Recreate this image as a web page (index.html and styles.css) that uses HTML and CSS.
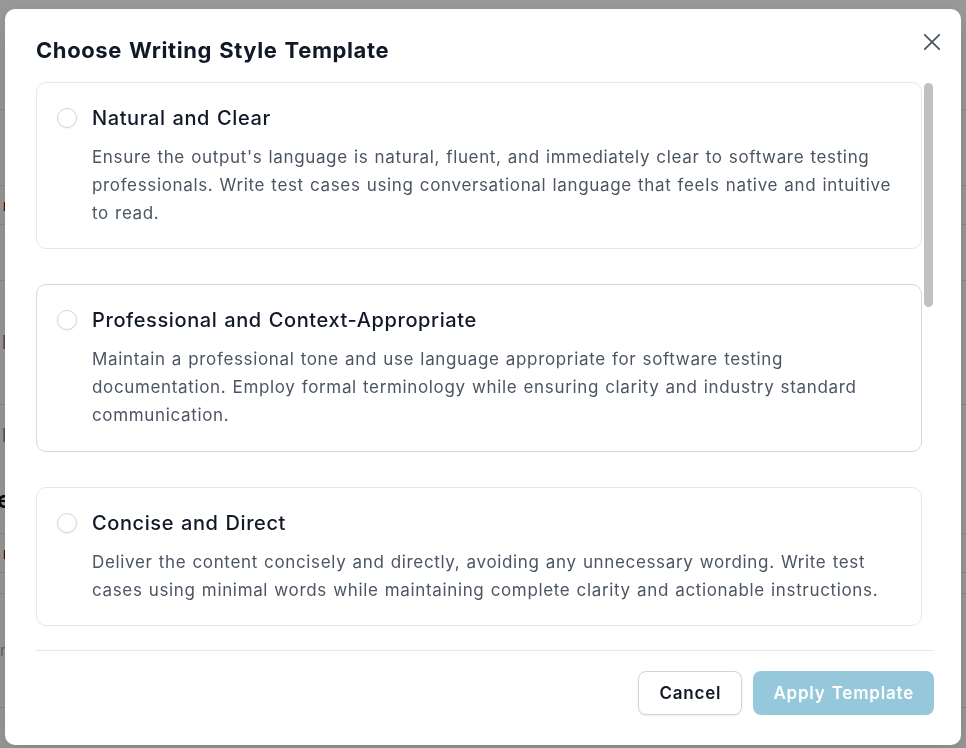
FILE: index.html
```html
<!DOCTYPE html>
<html lang="en">
<head>
<meta charset="utf-8">
<title>Choose Writing Style Template</title>
<link rel="stylesheet" href="styles.css">
</head>
<body>
<div class="page">
  <div class="row r1"></div>
  <div class="row r2"></div>
  <div class="row r3"><span class="bg-text red">r</span></div>
  <div class="row r4"></div>
  <div class="row r5"><span class="bg-text mauve">l</span></div>
  <div class="row r6"><span class="bg-text blue">l</span><h3 class="bg-head">Template</h3></div>
  <div class="row r7"><span class="bg-text red">r</span></div>
  <div class="row r8"></div>
  <div class="row r9"><span class="bg-text gray">r</span></div>
  <div class="row r10"></div>
</div>
<div class="overlay"></div>

<div class="modal" role="dialog" aria-labelledby="modal-title">
  <button class="close" type="button" aria-label="Close">
    <svg width="24" height="24" viewBox="0 0 24 24" fill="none" stroke="currentColor" stroke-width="1.8" stroke-linecap="round"><path d="M4.8 4.8 19.2 19.2M19.2 4.8 4.8 19.2"/></svg>
  </button>
  <h2 class="title" id="modal-title">Choose Writing Style Template</h2>

  <div class="list-wrap">
    <div class="list">
      <label class="card">
        <span class="radio"></span>
        <span class="card-body">
          <span class="card-title">Natural and Clear</span>
          <span class="desc">Ensure the output's language is natural, fluent, and immediately clear to software testing professionals. Write test cases using conversational language that feels native and intuitive to read.</span>
        </span>
      </label>
      <label class="card card-hover">
        <span class="radio"></span>
        <span class="card-body">
          <span class="card-title">Professional and Context-Appropriate</span>
          <span class="desc">Maintain a professional tone and use language appropriate for software testing documentation. Employ formal terminology while ensuring clarity and industry standard communication.</span>
        </span>
      </label>
      <label class="card">
        <span class="radio"></span>
        <span class="card-body">
          <span class="card-title">Concise and Direct</span>
          <span class="desc">Deliver the content concisely and directly, avoiding any unnecessary wording. Write test cases using minimal words while maintaining complete clarity and actionable instructions.</span>
        </span>
      </label>
    </div>
    <div class="scrollbar" aria-hidden="true"><div class="thumb"></div></div>
  </div>

  <div class="footer">
    <button class="btn btn-cancel" type="button">Cancel</button>
    <button class="btn btn-apply" type="button" disabled>Apply Template</button>
  </div>
</div>
</body>
</html>
```
FILE: styles.css
```css
* { box-sizing: border-box; }

html, body {
  margin: 0;
  height: 100%;
  overflow: hidden;
}

body {
  font-family: Inter, "Noto Sans", sans-serif;
  background: #ffffff;
  color: #111827;
}

/* background page (under overlay) */
.page {
  width: 100%;
}
.row {
  border-bottom: 1px solid #e5e7eb;
  display: flex;
  align-items: center;
}
.r1 { height: 110px; }
.r2 { height: 76px; }
.r3 { height: 39px; }
.r4 { height: 56px; }
.r5 { height: 124px; }
.r6 { height: 129px; flex-direction: column; align-items: flex-start; justify-content: space-around; }
.r7 { height: 39px; }
.r8 { height: 21px; }
.r9 { height: 114px; }
.r10 { height: 60px; border-bottom: none; }

.bg-text {
  font-size: 15px;
  padding-left: 3px;
}
.red { color: #8b0000; font-weight: 700; }
.mauve { color: #a07090; padding-left: 2px; font-size: 18px; }
.blue { color: #6b8aa8; padding-left: 2px; font-size: 18px; }
.gray { color: #9ca3af; padding-left: 0; }
.bg-head {
  margin: 0 0 0 -96px;
  font-size: 24px;
  font-weight: 600;
  color: #111;
}

.overlay {
  position: fixed;
  inset: 0;
  background: rgba(0, 0, 0, 0.4);
}

/* modal */
.modal {
  position: fixed;
  left: 5px;
  top: 9px;
  width: 956px;
  height: 736px;
  background: #ffffff;
  border-radius: 10px;
  box-shadow: 0 10px 30px rgba(0, 0, 0, 0.15);
  padding: 27px 27px 30px 31px;
  display: flex;
  flex-direction: column;
}

.close {
  position: absolute;
  top: 21px;
  right: 17px;
  width: 24px;
  height: 24px;
  padding: 0;
  border: 0;
  background: transparent;
  color: #4b5563;
  cursor: pointer;
  display: flex;
}

.title {
  margin: 0 0 18px;
  font-size: 22px;
  line-height: 28px;
  font-weight: 700;
  letter-spacing: 0.6px;
  word-spacing: 1.3px;
  color: #111827;
}

.list-wrap {
  height: 552px;
  display: flex;
}

.list {
  flex: 1;
  min-width: 0;
  overflow: hidden;
  display: flex;
  flex-direction: column;
  gap: 35px;
}

.scrollbar {
  flex: none;
  width: 12px;
  padding: 1px 1.5px;
}
.thumb {
  height: 224px;
  background: #c1c1c1;
  border-radius: 5px;
}

.card {
  flex: none;
  display: flex;
  gap: 15px;
  align-items: flex-start;
  border: 1px solid #e5e7eb;
  border-radius: 10px;
  padding: 21px 20px 21px;
  cursor: pointer;
}
.card-hover { border-color: #d5d9e0; padding-bottom: 22px; }

.radio {
  flex: none;
  width: 20px;
  height: 20px;
  margin-top: 4px;
  border: 1px solid #d1d5db;
  border-radius: 50%;
  background: #fff;
  box-shadow: 0 1px 2px rgba(0, 0, 0, 0.06);
}

.card-body {
  display: flex;
  flex-direction: column;
  min-width: 0;
}

.card-title {
  font-size: 20px;
  line-height: 28px;
  font-weight: 500;
  letter-spacing: 0.6px;
  word-spacing: 1px;
  color: #111827;
}

.desc {
  margin-top: 11px;
  font-size: 17px;
  line-height: 28px;
  font-weight: 400;
  letter-spacing: 0.65px;
  word-spacing: 0.8px;
  color: #4b5563;
}

.footer {
  margin-top: 16px;
  border-top: 1px solid #e5e7eb;
  padding-top: 20px;
  display: flex;
  justify-content: flex-end;
  gap: 11px;
}

.btn {
  height: 44px;
  padding: 0 20px;
  border-radius: 8px;
  font-family: inherit;
  font-size: 17px;
  font-weight: 600;
  letter-spacing: 0.8px;
  word-spacing: 1px;
  cursor: pointer;
}
.btn-cancel {
  background: #ffffff;
  border: 1px solid #d1d5db;
  color: #111827;
  box-shadow: 0 1px 2px rgba(0, 0, 0, 0.08);
}
.btn-apply {
  background: #96c8dc;
  border: 0;
  color: #ffffff;
  cursor: not-allowed;
}
```
